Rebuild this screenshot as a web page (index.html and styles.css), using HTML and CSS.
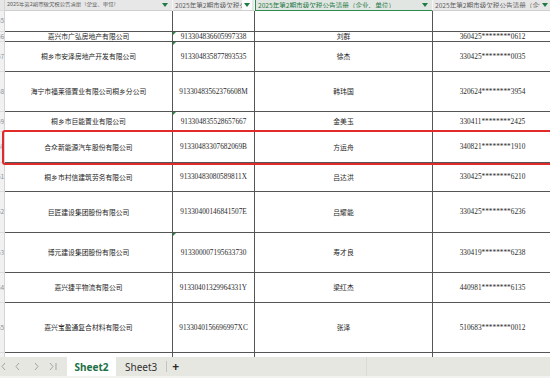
FILE: index.html
```html
<!DOCTYPE html>
<html lang="zh-CN">
<head>
  <meta charset="UTF-8" />
  <title>欠税公告清册</title>
  <link rel="stylesheet" href="styles.css">
</head>
<body>
  <main class="sheet">
    <!-- column headers (filter row) -->
    <div class="row head">
      <div class="rn"></div>
      <div class="hc hc-a"><span class="ht">2025年第2期市级欠税公告清册（企业、单位）</span><span class="dd"></span></div>
      <div class="hc"><span class="ht">2025年第2期市级欠税公告清册（企业、单位）</span><span class="dd dd-white"></span></div>
      <div class="hc hc-active"><span class="ht">2025年第2期市级欠税公告清册（企业、单位）</span><span class="dd"></span></div>
      <div class="hc"><span class="ht">2025年第2期市级欠税公告清册（企业、单位）</span><span class="dd"></span></div>
    </div>

    <div class="row h21">
      <div class="rn">55</div><div class="c"></div><div class="c"></div><div class="c"></div><div class="c"></div>
    </div>
    <div class="row h10">
      <div class="rn">56</div>
      <div class="c name">嘉兴市广弘房地产有限公司</div>
      <div class="c num warn">913304836605997338</div>
      <div class="c name">刘群</div>
      <div class="c num">360425********0612</div>
    </div>
    <div class="row h30">
      <div class="rn">57</div>
      <div class="c name">桐乡市安泽房地产开发有限公司</div>
      <div class="c num warn">913304835877893535</div>
      <div class="c name">徐杰</div>
      <div class="c num">330425********0035</div>
    </div>
    <div class="row h40">
      <div class="rn">58</div>
      <div class="c name">海宁市福莱德置业有限公司桐乡分公司</div>
      <div class="c num">91330483562376608M</div>
      <div class="c name">韩玮国</div>
      <div class="c num">320624********3954</div>
    </div>
    <div class="row h20">
      <div class="rn">59</div>
      <div class="c name">桐乡市巨能置业有限公司</div>
      <div class="c num warn">913304835528657667</div>
      <div class="c name">金美玉</div>
      <div class="c num">330411********2425</div>
    </div>
    <div class="row h31">
      <div class="rn">60</div>
      <div class="c name">合众新能源汽车股份有限公司</div>
      <div class="c num">91330483307682069B</div>
      <div class="c name">方运舟</div>
      <div class="c num">340821********1910</div>
    </div>
    <div class="row h29">
      <div class="rn">61</div>
      <div class="c name">桐乡市村信建筑劳务有限公司</div>
      <div class="c num">91330483080589811X</div>
      <div class="c name">吕达洪</div>
      <div class="c num">330425********6210</div>
    </div>
    <div class="row h41">
      <div class="rn">62</div>
      <div class="c name">巨匠建设集团股份有限公司</div>
      <div class="c num">91330400146841507E</div>
      <div class="c name">吕耀能</div>
      <div class="c num">330425********6236</div>
    </div>
    <div class="row h40">
      <div class="rn">63</div>
      <div class="c name">博元建设集团股份有限公司</div>
      <div class="c num warn">913300007195633730</div>
      <div class="c name">寿才良</div>
      <div class="c num">330419********6238</div>
    </div>
    <div class="row h30">
      <div class="rn">64</div>
      <div class="c name">嘉兴捷平物流有限公司</div>
      <div class="c num">91330401329964331Y</div>
      <div class="c name">梁红杰</div>
      <div class="c num">440981********6135</div>
    </div>
    <div class="row h50">
      <div class="rn">65</div>
      <div class="c name">嘉兴宝盈通复合材料有限公司</div>
      <div class="c num">9133040156696997XC</div>
      <div class="c name">张泽</div>
      <div class="c num">510683********0012</div>
    </div>
    <div class="row h30">
      <div class="rn">66</div><div class="c"></div><div class="c"></div><div class="c"></div><div class="c"></div>
    </div>

    <!-- highlight drawn over the 合众 row -->
    <div class="mark"></div>
  </main>

  <footer class="tabs">
    <svg class="nav" width="62" height="19" viewBox="0 0 62 19">
      <path d="M5 6 L2 9.5 L5 13" />
      <path d="M19 6 L16 9.5 L19 13" />
      <path d="M35 6 L38 9.5 L35 13" />
      <path d="M50 6 L53 9.5 L50 13 M56 6 V13" />
    </svg>
    <div class="tab tab-on">Sheet2</div>
    <div class="tab">Sheet3</div>
    <span class="sep"></span>
    <span class="plus">+</span>
    <span class="scroll"></span>
  </footer>
</body>
</html>
```

FILE: styles.css
```css
* {
  box-sizing: border-box;
}
html, body {
  margin: 0;
  padding: 0;
  width: 550px;
  height: 378px;
  overflow: hidden;
  background: #fff;
  color: #222;
  font-family: "Noto Sans CJK SC", "Noto Sans", sans-serif;
}

.sheet {
  position: relative;
  width: 553px;
  height: 357px;
  overflow: hidden;
}

.row {
  display: grid;
  grid-template-columns: 5px 168px 82px 178px 120px;
}

/* row heights */
.head { height: 11px; }
.h10 { height: 10px; }
.h20 { height: 20px; }
.h21 { height: 21px; }
.h29 { height: 29px; }
.h30 { height: 30px; }
.h31 { height: 31px; }
.h40 { height: 40px; }
.h41 { height: 41px; }
.h50 { height: 50px; }

/* row numbers, mostly scrolled out of view */
.rn {
  display: flex;
  align-items: center;
  justify-content: flex-end;
  overflow: hidden;
  background: #f1f1f1;
  border-right: 1px solid #d4d4d4;
  border-bottom: 1px solid #dcdcdc;
  color: #8a8a8a;
  font-size: 6px;
  line-height: 1;
}
.head .rn {
  background: #e6e6e6;
}

/* header / filter cells */
.hc {
  display: flex;
  align-items: center;
  overflow: hidden;
  white-space: nowrap;
  background: #e7e7e7;
  border-right: 1px solid #f6f6f6;
  border-bottom: 1px solid #cfcfcf;
  padding-left: 2px;
  color: #5e5e5e;
  font-size: 6.6px;
  line-height: 1;
}
.hc-a {
  font-size: 5.4px;
}
.ht {
  flex: 1;
  overflow: hidden;
}
.hc-active {
  background: #e2e6e3;
  color: #1f7a45;
  border-left: 1px solid #2b8a50;
  border-bottom: 1px solid #2b8a50;
}
.dd {
  flex: none;
  position: relative;
  width: 10px;
  height: 10px;
  margin-right: 2px;
}
.dd::after {
  content: "";
  position: absolute;
  left: 2px;
  top: 3px;
  border-left: 3px solid transparent;
  border-right: 3px solid transparent;
  border-top: 4px solid #1f7a45;
}
.dd-white {
  background: #fbfbfb;
}

/* body cells */
.c {
  position: relative;
  display: flex;
  align-items: center;
  justify-content: center;
  overflow: hidden;
  white-space: nowrap;
  border-right: 1px solid #555;
  border-bottom: 1px solid #555;
  line-height: 1;
}
.name {
  font-size: 6.8px;
  color: #1e1e1e;
}
.num {
  font-family: "Liberation Serif", "Noto Sans CJK SC", serif;
  font-size: 7.3px;
  color: #2a2a2a;
}
/* "number stored as text" marker */
.warn::before {
  content: "";
  position: absolute;
  left: 0;
  top: 0;
  border-top: 3px solid #1f8a3e;
  border-right: 3px solid transparent;
}

.mark {
  position: absolute;
  left: 2px;
  top: 130px;
  width: 570px;
  height: 35px;
  border: 2px solid #e12b2b;
  border-radius: 3px;
}

/* sheet tabs */
.tabs {
  display: flex;
  align-items: center;
  height: 21px;
  background: #e7e7e2;
  border-bottom: 2px solid #f2f2ef;
  font-family: "Noto Sans", sans-serif;
  font-size: 10px;
  color: #333;
}
.nav {
  flex: none;
  fill: none;
  stroke: #a3a3a3;
  stroke-width: 1;
}
.tab {
  height: 100%;
  display: flex;
  align-items: center;
  padding: 0 9px;
}
.tab-on {
  margin-left: 5px;
  width: 49px;
  justify-content: center;
  padding: 0;
  background: #fff;
  color: #1e7145;
  font-weight: 700;
}
.sep {
  width: 1px;
  height: 11px;
  background: #c4c4c0;
}
.plus {
  margin-left: 5px;
  font-size: 12px;
  font-weight: 700;
  color: #2b2b2b;
}
.scroll {
  margin-left: 187px;
  width: 1px;
  height: 100%;
  background: #dadad6;
}
```
